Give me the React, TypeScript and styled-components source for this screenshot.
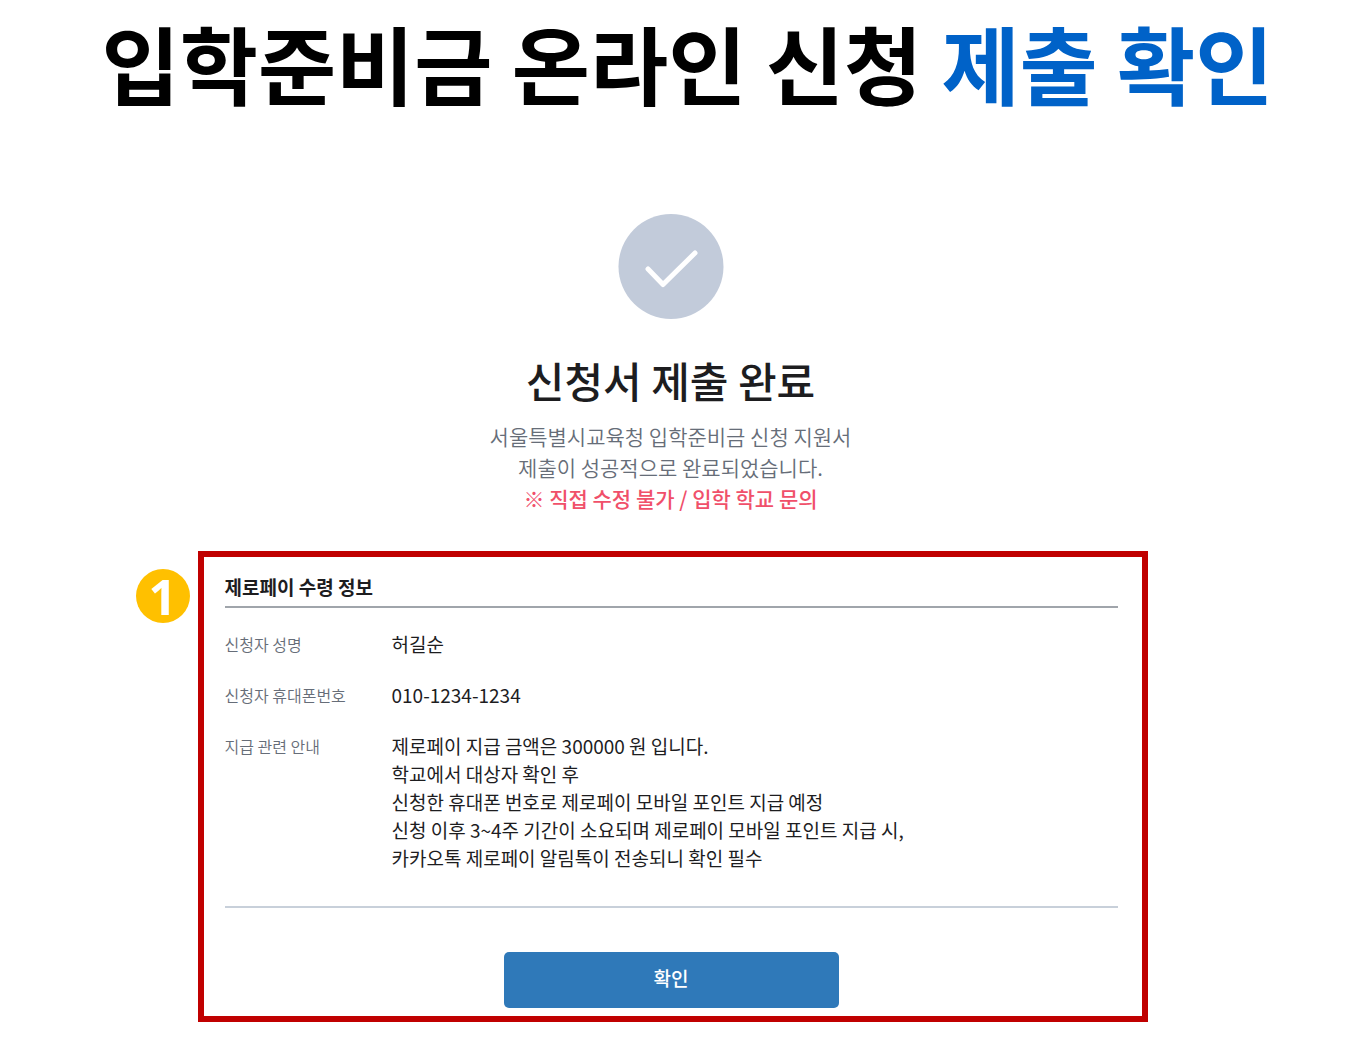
import React from 'react';
import styled, { createGlobalStyle } from 'styled-components';

const Global = createGlobalStyle`
  * { box-sizing: border-box; }
  body { margin: 0; background: #fff; color: #1d1d1f; font-family: "Noto Sans CJK KR", "Noto Sans", sans-serif; }
`;
const Page = styled.main`
  display: flex; flex-direction: column; align-items: center; padding: 2px 0 28px;
`;
const Title = styled.h1`
  margin: 0; padding-left: 14px; font-size: 85px; line-height: 120px; font-weight: 700; color: #000; white-space: nowrap;
`;
const Accent = styled.span` color: #0062c8; `;
const Badge = styled.svg` display: block; width: 106px; height: 106px; margin-top: 91px; margin-right: 20px; `;
const Intro = styled.section`
  display: flex; flex-direction: column; align-items: center; text-align: center; padding-right: 20px;
`;
const Heading = styled.h2`
  margin: 30px 0 10px; font-size: 42px; line-height: 62px; font-weight: 500;
`;
const Message = styled.p<{ $alert?: boolean }>`
  margin: 0; font-size: 21px; line-height: 31px;
  font-weight: ${p => (p.$alert ? 500 : 350)};
  color: ${p => (p.$alert ? '#f0506a' : '#666d78')};
`;
const Callout = styled.div`
  position: relative; width: calc(100% - 411px); margin: 37px 16px 0 0;
`;
const Marker = styled.span`
  position: absolute; left: -62px; top: 18px; width: 54px; height: 54px; border-radius: 50%;
  display: flex; align-items: center; justify-content: center;
  background: #ffc000; color: #fff; font-family: "Open Sans", "Noto Sans", sans-serif; font-size: 49px; line-height: 54px; font-weight: 700;
`;
const Panel = styled.section`
  border: 6px solid #c00000; padding: 16px 24px 8px 21px;
`;
const PanelTitle = styled.h3`
  margin: 0; padding-bottom: 5px; font-size: 19px; line-height: 28px; font-weight: 700; border-bottom: 2px solid #a0a5ab;
`;
const Details = styled.dl`
  margin: 0; padding: 22px 0 34px; display: grid; grid-template-columns: 167px 1fr; row-gap: 23px;
  border-bottom: 2px solid #c8d0da;
`;
const Term = styled.dt` font-size: 16px; line-height: 28px; font-weight: 350; color: #666d78; `;
const Value = styled.dd` margin: 0; font-size: 19px; line-height: 28px; font-weight: 400; `;
const Line = styled.span` display: block; `;
const Confirm = styled.button`
  display: block; width: 335px; height: 56px; margin: 44px auto 0; padding: 0 0 4px; border: 0; border-radius: 5px;
  background: #2f79b9; color: #fff; font: 500 19px/28px "Noto Sans CJK KR", sans-serif; cursor: pointer;
`;

const guide = [
  '제로페이 지급 금액은 300000 원 입니다.',
  '학교에서 대상자 확인 후',
  '신청한 휴대폰 번호로 제로페이 모바일 포인트 지급 예정',
  '신청 이후 3~4주 기간이 소요되며 제로페이 모바일 포인트 지급 시,',
  '카카오톡 제로페이 알림톡이 전송되니 확인 필수',
];

export default function App() {
  return (
    <Page>
      <Global />
      <Title>입학준비금 온라인 신청 <Accent>제출 확인</Accent></Title>
      <Badge viewBox="0 0 106 106" aria-hidden="true">
        <circle cx="53" cy="53.500" r="52.500" fill="#c2cbda" />
        <path d="M30 56L45 71.500L77 40" fill="none" stroke="#fff" strokeWidth="5" strokeLinecap="round" strokeLinejoin="round" />
      </Badge>
      <Intro>
        <Heading>신청서 제출 완료</Heading>
        <Message>서울특별시교육청 입학준비금 신청 지원서</Message>
        <Message>제출이 성공적으로 완료되었습니다.</Message>
        <Message $alert>※ 직접 수정 불가 / 입학 학교 문의</Message>
      </Intro>
      <Callout>
        <Marker>1</Marker>
        <Panel>
          <PanelTitle>제로페이 수령 정보</PanelTitle>
          <Details>
            <Term>신청자 성명</Term><Value>허길순</Value>
            <Term>신청자 휴대폰번호</Term><Value>010-1234-1234</Value>
            <Term>지급 관련 안내</Term>
            <Value>{guide.map(text => <Line key={text}>{text}</Line>)}</Value>
          </Details>
          <Confirm type="button">확인</Confirm>
        </Panel>
      </Callout>
    </Page>
  );
}
